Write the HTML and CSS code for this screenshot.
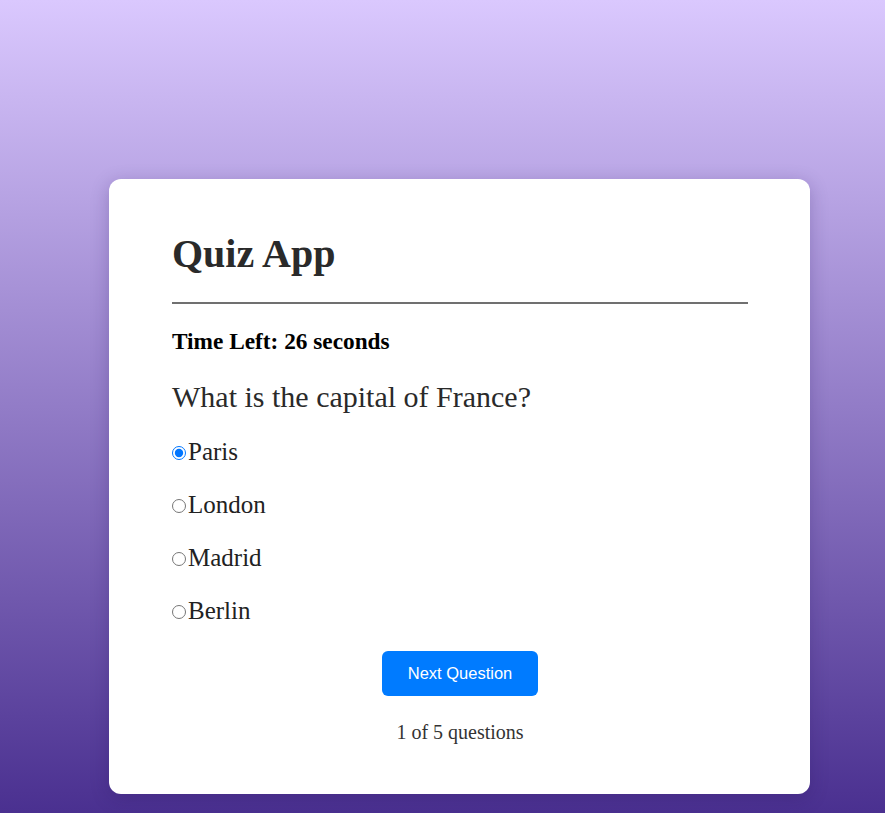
FILE: index.html
```html
<!DOCTYPE html>
<html lang="en">
<head>
<meta charset="utf-8">
<title>Quiz App</title>
<link rel="stylesheet" href="styles.css">
</head>
<body>
  <main class="card">
    <h1 class="title">Quiz App</h1>
    <p class="timer">Time Left: 26 seconds</p>
    <h2 class="question">What is the capital of France?</h2>
    <div class="options">
      <label class="option"><input type="radio" name="answer" checked>Paris</label>
      <label class="option"><input type="radio" name="answer">London</label>
      <label class="option"><input type="radio" name="answer">Madrid</label>
      <label class="option"><input type="radio" name="answer">Berlin</label>
    </div>
    <div class="actions">
      <button class="next-btn" type="button">Next Question</button>
    </div>
    <p class="counter">1 of 5 questions</p>
  </main>
</body>
</html>
```

FILE: styles.css
```css
* {
  box-sizing: border-box;
}

html, body {
  margin: 0;
  height: 100%;
}

body {
  background: linear-gradient(to bottom, #dac8fe 0%, #4a3090 100%);
  font-family: "Liberation Serif", "Times New Roman", serif;
  padding: 179px 75px 0 109px;
  overflow: hidden;
}

.card {
  background: #ffffff;
  border-radius: 12px;
  box-shadow: 0 4px 18px rgba(40, 20, 90, 0.25);
  padding: 51px 62px 50px 63px;
}

.title {
  margin: 0;
  font-size: 40px;
  font-weight: bold;
  color: #2a2a2a;
  padding-bottom: 25px;
  border-bottom: 2px solid #707070;
}

.timer {
  margin: 24px 0 0;
  font-size: 23.3px;
  font-weight: bold;
  color: #000;
}

.question {
  margin: 25px 0 0;
  font-size: 30px;
  font-weight: normal;
  color: #2a2a2a;
}

.options {
  display: flex;
  flex-direction: column;
  gap: 25px;
  margin-top: 24px;
}

.option {
  display: block;
  font-size: 25px;
  color: #222;
}

.option input {
  margin: 0 2px 3px 0;
  width: 14px;
  height: 14px;
}

.actions {
  display: flex;
  justify-content: center;
  margin-top: 26px;
}

.next-btn {
  background: #007bff;
  color: #fff;
  border: none;
  border-radius: 6px;
  font-family: "Liberation Sans", Arial, sans-serif;
  font-size: 16.5px;
  line-height: 19px;
  padding: 13px 25.5px;
  cursor: pointer;
}

.counter {
  margin: 25px 0 0;
  text-align: center;
  font-size: 20px;
  color: #333;
}
```
